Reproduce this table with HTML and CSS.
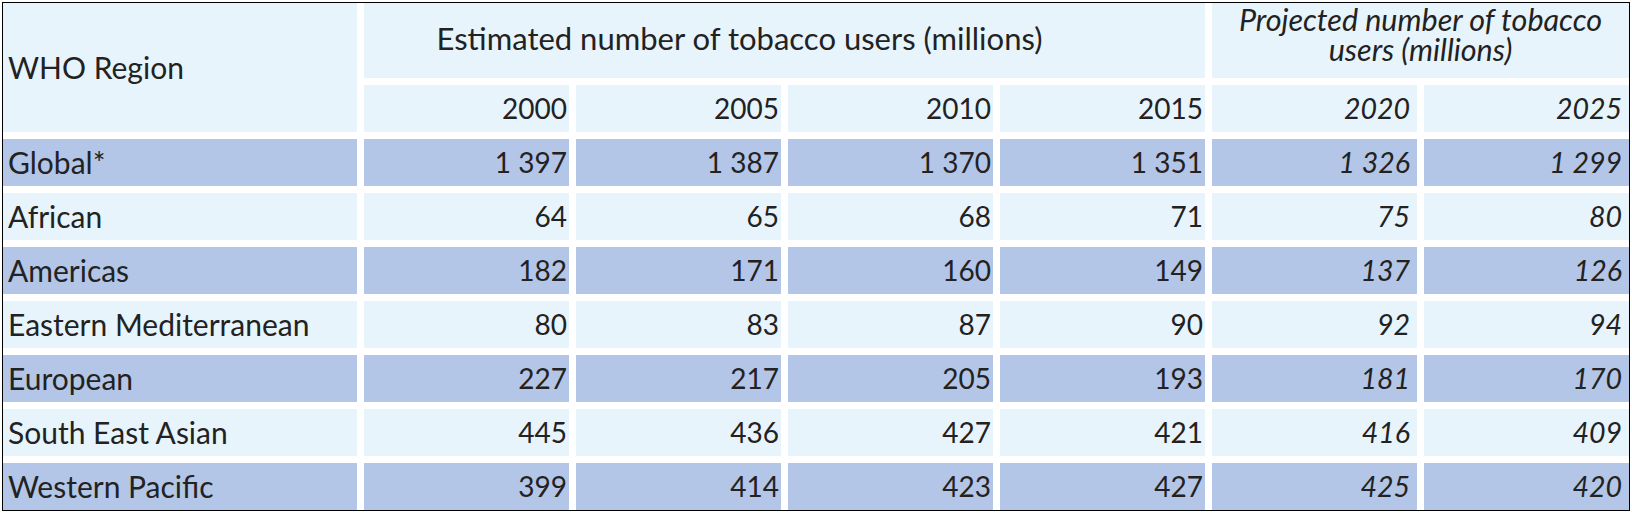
FILE: index.html
```html
<!DOCTYPE html>
<html lang="en">
<head>
<meta charset="utf-8">
<title>Tobacco users by WHO region</title>
<link rel="stylesheet" href="styles.css">
</head>
<body>
<div class="frame">
  <div class="grid">
    <div class="cell head region">WHO Region</div>
    <div class="cell head group est">Estimated number of tobacco users (millions)</div>
    <div class="cell head group proj it">Projected number of tobacco<br>users (millions)</div>

    <div class="cell head num">2000</div>
    <div class="cell head num">2005</div>
    <div class="cell head num">2010</div>
    <div class="cell head num">2015</div>
    <div class="cell head num it">2020</div>
    <div class="cell head num it">2025</div>

    <div class="cell dark">Global*</div>
    <div class="cell dark num">1&nbsp;397</div>
    <div class="cell dark num">1&nbsp;387</div>
    <div class="cell dark num">1&nbsp;370</div>
    <div class="cell dark num">1&nbsp;351</div>
    <div class="cell dark num it">1&nbsp;326</div>
    <div class="cell dark num it">1&nbsp;299</div>

    <div class="cell">African</div>
    <div class="cell num">64</div>
    <div class="cell num">65</div>
    <div class="cell num">68</div>
    <div class="cell num">71</div>
    <div class="cell num it">75</div>
    <div class="cell num it">80</div>

    <div class="cell dark">Americas</div>
    <div class="cell dark num">182</div>
    <div class="cell dark num">171</div>
    <div class="cell dark num">160</div>
    <div class="cell dark num">149</div>
    <div class="cell dark num it">137</div>
    <div class="cell dark num it">126</div>

    <div class="cell">Eastern Mediterranean</div>
    <div class="cell num">80</div>
    <div class="cell num">83</div>
    <div class="cell num">87</div>
    <div class="cell num">90</div>
    <div class="cell num it">92</div>
    <div class="cell num it">94</div>

    <div class="cell dark">European</div>
    <div class="cell dark num">227</div>
    <div class="cell dark num">217</div>
    <div class="cell dark num">205</div>
    <div class="cell dark num">193</div>
    <div class="cell dark num it">181</div>
    <div class="cell dark num it">170</div>

    <div class="cell">South East Asian</div>
    <div class="cell num">445</div>
    <div class="cell num">436</div>
    <div class="cell num">427</div>
    <div class="cell num">421</div>
    <div class="cell num it">416</div>
    <div class="cell num it">409</div>

    <div class="cell dark">Western Pacific</div>
    <div class="cell dark num">399</div>
    <div class="cell dark num">414</div>
    <div class="cell dark num">423</div>
    <div class="cell dark num">427</div>
    <div class="cell dark num it">425</div>
    <div class="cell dark num it">420</div>
  </div>
</div>
</body>
</html>
```

FILE: styles.css
```css
html, body {
  margin: 0;
  padding: 0;
  background: #ffffff;
}

body {
  padding: 2px;
  font-family: Lato, "Open Sans", sans-serif;
  font-size: 30px;
  color: #222222;
}

.frame {
  width: 1626px;
  border: 1px solid #000;
}

.grid {
  display: grid;
  grid-template-columns: 354px repeat(6, 1fr);
  grid-template-rows: 75px 47px repeat(7, 47px);
  column-gap: 7px;
  row-gap: 7px;
}

.cell {
  background: #e7f4fc;
  display: flex;
  align-items: center;
  padding: 0 5px;
  line-height: 1.1;
  white-space: nowrap;
}

.cell.dark {
  background: #b3c6e7;
}

.num {
  justify-content: flex-end;
  padding-right: 2px;
  font-size: 28px;
}

.num.it {
  padding-right: 7px;
  font-size: 28.5px;
}

.it {
  font-style: italic;
}

.region {
  grid-row: span 2;
}

.group {
  justify-content: center;
  text-align: center;
}

.est {
  grid-column: span 4;
  font-size: 31px;
  padding: 0 95px 5px 5px;
}

.proj {
  grid-column: span 2;
  font-size: 30.5px;
  line-height: 29.5px;
  padding-bottom: 12px;
}
```
